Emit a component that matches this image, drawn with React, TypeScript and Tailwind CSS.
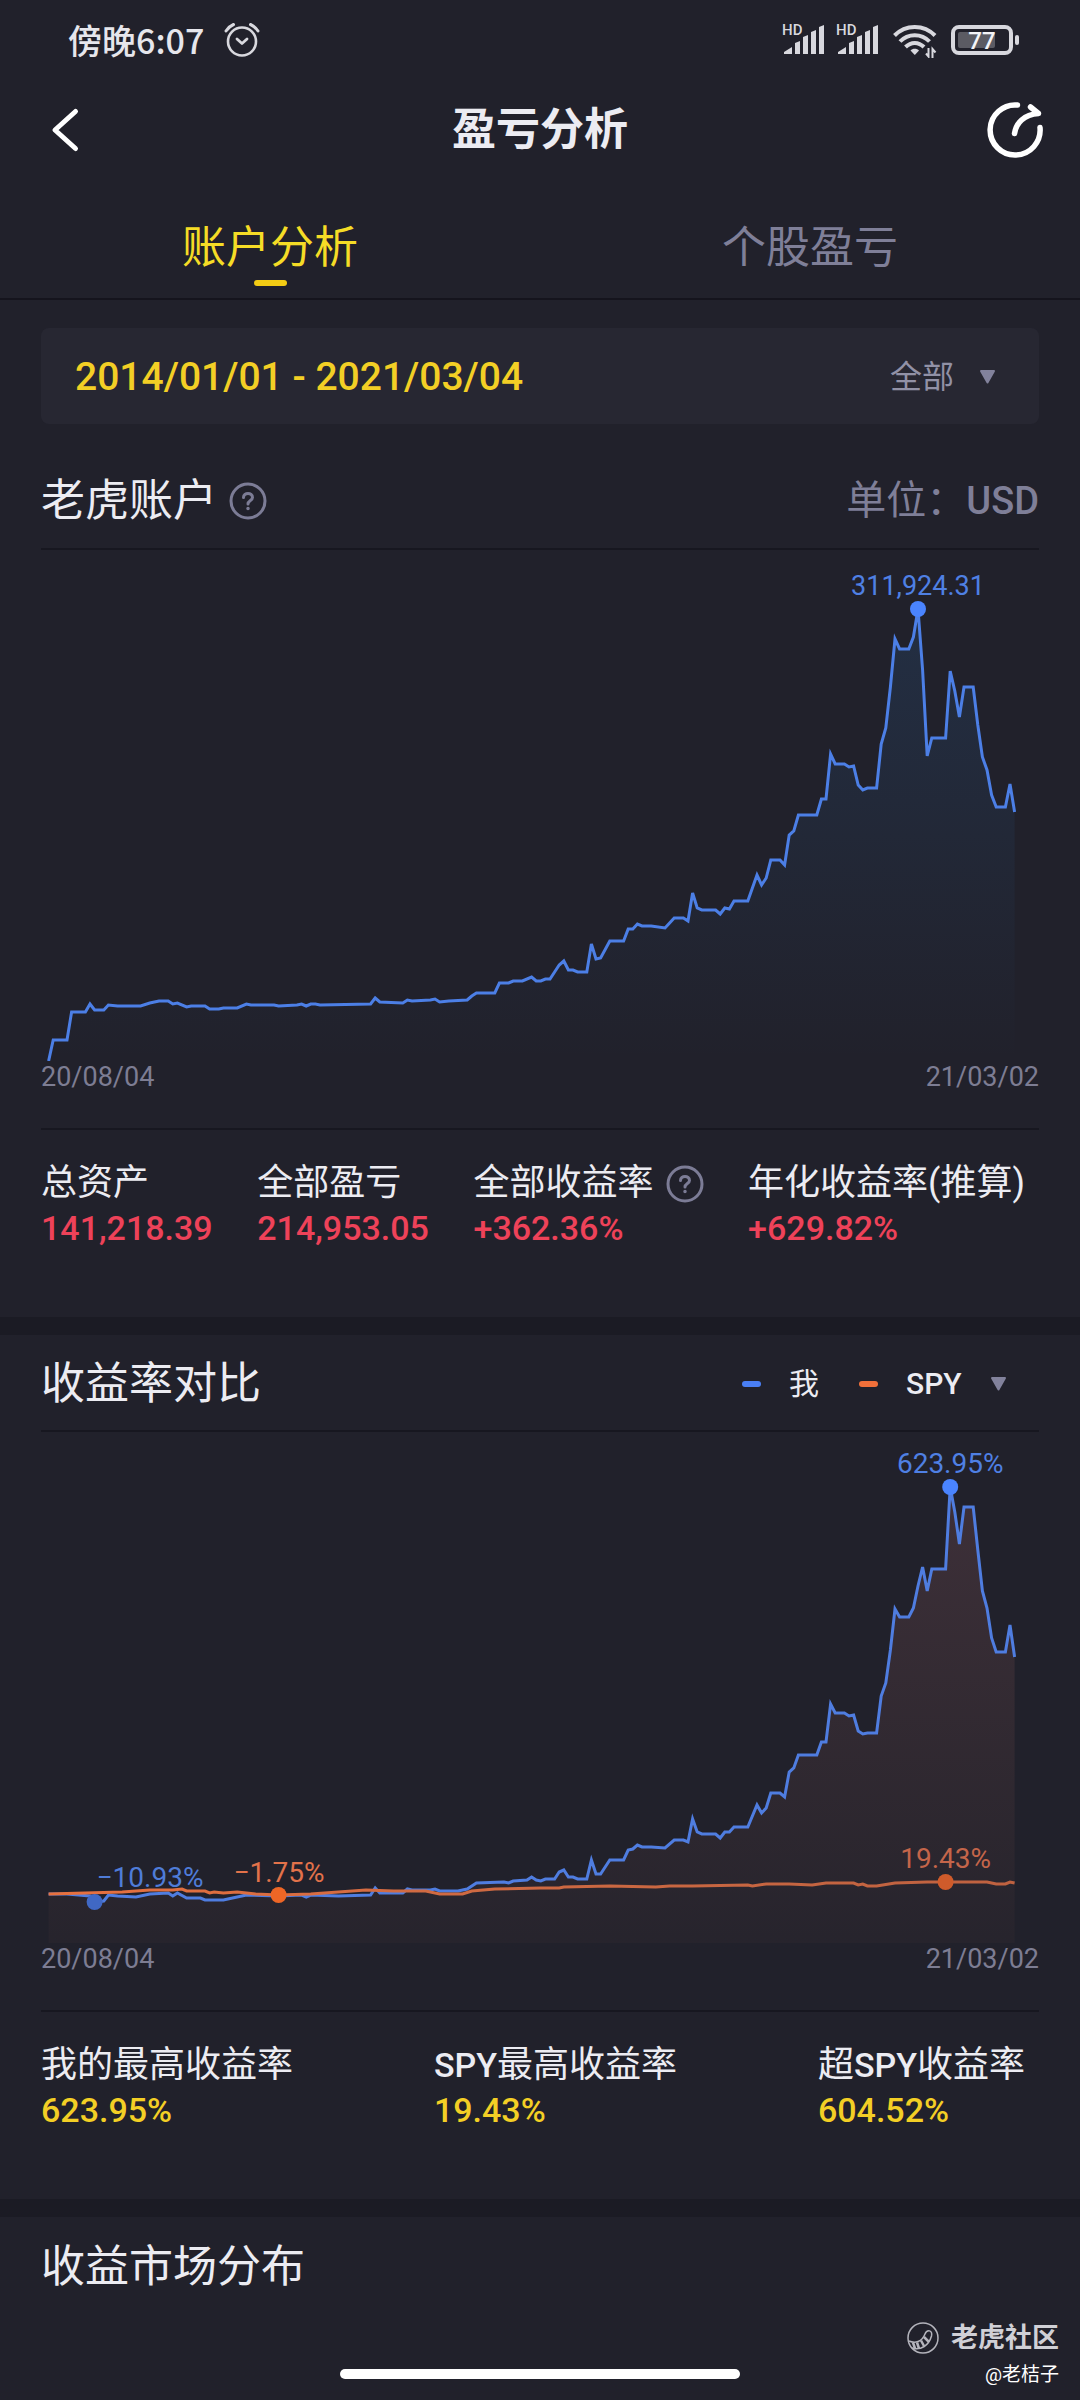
import React, { useState } from 'react';

type Point = [number, number];

// [day, y] pairs, one day is one step on the x axis
const ASSETS: Point[] = [
  [0, 511], [1, 490], [4, 490], [5, 462], [8, 462], [9, 454], [10, 460], [12, 460], [13, 455], [15, 456],
  [20, 456], [22, 453], [24, 451], [26, 451], [27, 454], [28, 453], [30, 457], [31, 456], [34, 456], [35, 459],
  [37, 459], [38, 458], [41, 458], [43, 454], [44, 455], [49, 455], [50, 456], [54, 455], [55, 454], [56, 456],
  [57, 454], [58, 454], [59, 455], [70, 454], [71, 448], [72, 452], [77, 453], [78, 450], [79, 451], [83, 450],
  [84, 449], [85, 452], [87, 451], [91, 450], [92, 446], [93, 443], [97, 443], [98, 433], [100, 433], [101, 431],
  [103, 431], [105, 427], [106, 431], [107, 431], [108, 429], [109, 429], [110, 422], [111, 415], [112, 411],
  [113, 420], [114, 420], [115, 422], [117, 422], [118, 394], [119, 409], [120, 408], [122, 391], [125, 391],
  [126, 379], [127, 379], [128, 374], [129, 376], [131, 376], [134, 378], [135, 373], [136, 368], [138, 368],
  [139, 371], [140, 343], [141, 358], [142, 360], [145, 360], [146, 364], [147, 358], [148, 359], [149, 351],
  [152, 351], [153, 338], [154, 325], [155, 335], [156, 328], [157, 310], [159, 310], [160, 315], [161, 285],
  [162, 281], [163, 265], [167, 265], [168, 249], [169, 249], [170, 204], [171, 214], [173, 214], [174, 217],
  [175, 216], [176, 235], [177, 240], [178, 238], [180, 238], [181, 194], [182, 178], [183, 137], [184, 89],
  [185, 99], [187, 99], [188, 87], [189, 59], [190, 120], [191, 206], [192, 188], [195, 188], [196, 121],
  [197, 141], [198, 167], [199, 137], [201, 137], [202, 175], [203, 207], [204, 220], [205, 245], [206, 257],
  [208, 257], [209, 234], [210, 262],
];

const MY_RETURN: Point[] = [
  [0, 462], [4, 462], [9, 464], [10, 470], [12, 469], [13, 463], [15, 464], [19, 465], [22, 462], [26, 461],
  [27, 464], [28, 461], [30, 466], [33, 466], [34, 468], [38, 468], [42, 464], [43, 463], [50, 464], [55, 463],
  [56, 465], [57, 463], [63, 464], [70, 463], [71, 456], [72, 461], [77, 461], [78, 457], [79, 458], [83, 458],
  [84, 457], [85, 459], [89, 459], [91, 457], [93, 451], [99, 450], [100, 451], [101, 449], [104, 448],
  [105, 445], [106, 448], [107, 449], [108, 447], [110, 447], [111, 440], [112, 438], [113, 445], [114, 445],
  [115, 447], [117, 447], [118, 428], [119, 442], [120, 442], [122, 428], [125, 428], [126, 418], [127, 417],
  [128, 413], [129, 415], [131, 415], [134, 416], [136, 408], [138, 408], [139, 410], [140, 387], [141, 400],
  [142, 402], [145, 402], [146, 406], [147, 400], [148, 400], [149, 395], [152, 395], [154, 373], [155, 381],
  [156, 376], [157, 361], [159, 361], [160, 365], [161, 340], [162, 336], [163, 323], [167, 323], [168, 310],
  [169, 310], [170, 272], [171, 281], [173, 281], [174, 284], [175, 283], [176, 299], [177, 302], [178, 301],
  [180, 301], [181, 264], [182, 251], [183, 218], [184, 177], [185, 185], [187, 185], [188, 176], [189, 154],
  [190, 135], [191, 159], [192, 137], [195, 137], [196, 55], [197, 80], [198, 112], [199, 75], [201, 75],
  [202, 118], [203, 159], [204, 176], [205, 206], [206, 220], [208, 220], [209, 193], [210, 225],
];

const SPY_RETURN: Point[] = [
  [0, 462], [8, 461], [16, 460], [22, 458], [27, 458], [29, 457], [30, 459], [34, 459], [35, 461], [36, 460],
  [38, 461], [41, 460], [45, 462], [50, 463], [57, 462], [63, 460], [69, 458], [75, 459], [82, 459], [85, 462],
  [90, 462], [92, 459], [97, 457], [107, 456], [111, 456], [112, 455], [122, 454], [132, 455], [135, 454],
  [140, 454], [152, 453], [153, 454], [156, 452], [161, 452], [166, 453], [169, 451], [175, 451], [176, 453],
  [177, 452], [178, 454], [180, 454], [184, 451], [191, 450], [195, 450], [202, 450], [204, 450], [206, 452],
  [208, 452], [209, 450], [210, 451],
];

const CHART_BOTTOM = 511;

const dayX = (day: number) => 7.6 + day * 4.6;
const toPoints = (series: Point[]) => series.map(([day, y]) => `${dayX(day)},${y}`).join(' ');
const toArea = (series: Point[]) =>
  `${dayX(0)},${CHART_BOTTOM} ${toPoints(series)} ${dayX(210)},${CHART_BOTTOM}`;

const Signal = () => (
  <svg className="h-[40px] w-[44px]" viewBox="0 0 44 40" fill="#d8d8de">
    <text x="1" y="15" fontSize="15" fontWeight="500">HD</text>
    <path d="M3 34V32L11 27V34ZM14 34V23L19 21V34ZM22 34V17L27 15V34ZM30 34V12L35 10V34ZM38 34V7L43 5V34Z" />
  </svg>
);

const StatusBar = () => (
  <div className="flex h-20 items-center justify-between pl-[68px] pr-[60px] text-[#e6e6ec]">
    <div className="flex items-center gap-5">
      <span className="font-['Noto_Sans_CJK_SC',sans-serif] text-[34px] font-medium leading-[48px]">傍晚6:07</span>
      <svg className="size-9" viewBox="0 0 36 36" fill="none" stroke="#d8d8de" strokeLinecap="round" strokeLinejoin="round">
        <circle cx="18" cy="19.5" r="14" strokeWidth="2.6" />
        <path d="M2 9C4 6 6 4 9.500 2.500M34 9C32 6 30 4 26.500 2.500" strokeWidth="3" />
        <path d="M13 17L18 21.500L23 17" strokeWidth="2.800" />
      </svg>
    </div>
    <div className="flex items-center">
      <Signal />
      <div className="w-[10px]" />
      <Signal />
      <svg className="ml-[14px] h-[36px] w-[44px]" viewBox="0 0 44 36" fill="none" stroke="#d8d8de" strokeWidth="4">
        <path d="M1.500 13.500C12.500 2 31 2 42 13.500" />
        <path d="M7 19.500C15 11 28.500 11 36.500 19.500" />
        <path d="M12.500 25C18 19.500 25.500 19.500 31 25" />
        <path d="M17.500 28.500L21.800 33L26 28.500C24 26 19.500 26 17.500 28.500Z" fill="#d8d8de" stroke="none" />
        <path d="M35.500 26V34.500L33 31.500M39.500 36V27L42.500 30.500" strokeWidth="2" />
      </svg>
      <svg className="ml-[14px] h-[30px] w-[69px]" viewBox="0 0 69 30">
        <rect x="2" y="2" width="58" height="26" rx="6" fill="none" stroke="#d8d8de" strokeWidth="4" />
        <rect x="7" y="7" width="37" height="16" rx="2" fill="#5b5b63" />
        <rect x="64" y="10" width="4" height="10" rx="2" fill="#d8d8de" />
        <text x="31" y="24" fontSize="24" fontWeight="500" fill="#f4f4f8" textAnchor="middle">77</text>
      </svg>
    </div>
  </div>
);

const HelpButton = ({ label }: { label: string }) => (
  <button type="button" aria-label={label}>
    <svg className="size-[38px]" viewBox="0 0 38 38" fill="none" stroke="#7c7c96" strokeLinecap="round">
      <circle cx="19" cy="19" r="17" strokeWidth="3" />
      <path d="M14.500 15.500C14.500 10 23.500 10 23.500 15.500C23.500 18.500 19 18.500 19 22" strokeWidth="3" />
      <circle cx="19" cy="26.500" r="1" fill="#7c7c96" strokeWidth="1.500" />
    </svg>
  </button>
);

const Caret = () => (
  <svg className="pointer-events-none h-[14px] w-[17px]" viewBox="0 0 17 14">
    <path d="M2 1H15L8.500 12.500Z" fill="#82829c" stroke="#82829c" strokeWidth="2" strokeLinejoin="round" />
  </svg>
);

const ChartDates = () => (
  <div className="flex justify-between text-[27px] leading-[32px] text-[#7d7d93]">
    <span>20/08/04</span>
    <span>21/03/02</span>
  </div>
);

interface Stat {
  label: React.ReactNode;
  value: string;
  help?: string;
}

const Stats = ({ items, color }: { items: Stat[]; color: string }) => (
  <dl className="mt-[35px] flex justify-between border-t-2 border-[#171720] pb-[66px] pr-[14px] pt-[31px]">
    {items.map((item) => (
      <div key={item.value}>
        <dt className="flex h-[45px] items-center gap-3 whitespace-nowrap text-[36px] leading-[45px] text-[#ececf2]">
          <span>{item.label}</span>
          {item.help && <HelpButton label={item.help} />}
        </dt>
        <dd className={`text-[34px] font-medium leading-[45px] ${color}`}>{item.value}</dd>
      </div>
    ))}
  </dl>
);

const App = () => {
  const [tab, setTab] = useState('account');
  const [range, setRange] = useState('all');
  const [benchmark, setBenchmark] = useState('SPY');

  const tabs = [
    { id: 'account', name: '账户分析' },
    { id: 'stock', name: '个股盈亏' },
  ];

  return (
    <div className="flex min-h-screen flex-col bg-[#21212b] font-['Roboto','Noto_Sans_CJK_SC',sans-serif] text-[#ececf2]">
      <StatusBar />

      <header className="grid h-[100px] grid-cols-[1fr_auto_1fr] items-center px-[37px]">
        <button type="button" aria-label="返回" className="justify-self-start pl-3">
          <svg className="h-[48px] w-[32px]" viewBox="0 0 32 48" fill="none" stroke="#fff" strokeWidth="5" strokeLinecap="round" strokeLinejoin="round">
            <path d="M26.500 5.500L6 24L26.500 42.500" />
          </svg>
        </button>
        <h1 className="text-[44px] font-bold leading-[60px]">盈亏分析</h1>
        <button type="button" aria-label="分享" className="justify-self-end">
          <svg className="size-14" viewBox="0 0 56 56" fill="none" stroke="#fff" strokeWidth="5.500" strokeLinecap="round" strokeLinejoin="round">
            <path d="M30.500 3.100A25 25 0 1 0 53 25.500" />
            <path d="M27.500 31.500C29 21 37 12.500 51.500 11.500L43.500 5" />
          </svg>
        </button>
      </header>

      <nav className="grid grid-cols-2 border-b-2 border-[#15141d]">
        {tabs.map((t) => (
          <button
            key={t.id}
            type="button"
            onClick={() => setTab(t.id)}
            className={`flex flex-col items-center pb-3 pt-[38px] text-[44px] leading-[60px] ${tab === t.id ? 'text-[#f5dc26]' : 'text-[#7f7f98]'}`}
          >
            {t.name}
            <span className={`mt-[2px] h-[6px] w-[33px] rounded-full ${tab === t.id ? 'bg-[#f3cc14]' : ''}`} />
          </button>
        ))}
      </nav>

      <main>
        <section className="px-[41px] pt-7">
          <div className="flex h-24 items-center justify-between rounded-lg bg-[#272732] pl-[34px] pr-[43px] pt-[2px]">
            <button type="button" className="text-[39px] font-medium leading-[48px] text-[#f3cf25]">
              2014/01/01 - 2021/03/04
            </button>
            <div className="flex items-center gap-6">
              <select
                aria-label="时间范围"
                value={range}
                onChange={(e) => setRange(e.target.value)}
                className="appearance-none bg-transparent text-[32px] leading-[48px] text-[#9191a6]"
              >
                <option value="all">全部</option>
                <option value="year">今年</option>
              </select>
              <Caret />
            </div>
          </div>

          <div className="mt-7 flex h-[98px] items-center justify-between border-b-2 border-[#171720] pt-[2px]">
            <div className="flex items-center gap-3">
              <h2 className="text-[44px] leading-[60px]">老虎账户</h2>
              <HelpButton label="账户说明" />
            </div>
            <p className="text-[40px] leading-[60px] text-[#7f7f98]">
              单位：<span className="text-[38px] font-medium">USD</span>
            </p>
          </div>

          <svg className="w-full" viewBox="0 0 998 511">
            <defs>
              <linearGradient id="assetFill" x1="0" y1="59" x2="0" y2="511" gradientUnits="userSpaceOnUse">
                <stop offset="0" stopColor="#2f84d8" stopOpacity="0.14" />
                <stop offset="1" stopColor="#2f84d8" stopOpacity="0" />
              </linearGradient>
            </defs>
            <polygon points={toArea(ASSETS)} fill="url(#assetFill)" />
            <polyline points={toPoints(ASSETS)} fill="none" stroke="#4c7fe6" strokeWidth="3" />
            <circle cx={dayX(189)} cy="59" r="8" fill="#4a84ff" />
            <text x={dayX(189)} y="45" fontSize="27" fill="#4f80e4" textAnchor="middle">311,924.31</text>
          </svg>
          <ChartDates />

          <Stats
            color="text-[#ee4259]"
            items={[
              { label: '总资产', value: '141,218.39' },
              { label: '全部盈亏', value: '214,953.05' },
              { label: '全部收益率', value: '+362.36%', help: '收益率说明' },
              { label: '年化收益率(推算)', value: '+629.82%' },
            ]}
          />
        </section>

        <div className="h-[18px] bg-[#1b1b24]" />

        <section className="px-[41px]">
          <div className="flex h-[97px] items-center justify-between border-b-2 border-[#171720] pt-[2px]">
            <h2 className="text-[44px] leading-[60px]">收益率对比</h2>
            <div className="flex items-center pr-8 text-[30px] leading-[48px]">
              <span className="mr-7 h-[6px] w-[19px] rounded-full bg-[#4a7ff5]" />
              <span className="mr-10">我</span>
              <span className="mr-7 h-[6px] w-[19px] rounded-full bg-[#f1703a]" />
              <select
                aria-label="对比指数"
                value={benchmark}
                onChange={(e) => setBenchmark(e.target.value)}
                className="mr-7 appearance-none bg-transparent font-medium leading-[48px]"
              >
                <option value="SPY">SPY</option>
                <option value="DIA">DIA</option>
              </select>
              <Caret />
            </div>
          </div>

          <svg className="w-full" viewBox="0 0 998 511">
            <defs>
              <linearGradient id="returnFill" x1="0" y1="55" x2="0" y2="511" gradientUnits="userSpaceOnUse">
                <stop offset="0" stopColor="#e08488" stopOpacity="0.15" />
                <stop offset="1" stopColor="#e08468" stopOpacity="0.03" />
              </linearGradient>
              <linearGradient id="spyLine" x1="0" y1="0" x2="998" y2="0" gradientUnits="userSpaceOnUse">
                <stop offset="0" stopColor="#e8713f" />
                <stop offset="0.4" stopColor="#d06a42" />
                <stop offset="1" stopColor="#be6140" />
              </linearGradient>
            </defs>
            <polygon points={toArea(MY_RETURN)} fill="url(#returnFill)" />
            <polyline points={toPoints(MY_RETURN)} fill="none" stroke="#4f7de0" strokeWidth="3" />
            <polyline points={toPoints(SPY_RETURN)} fill="none" stroke="url(#spyLine)" strokeWidth="3" />
            <circle cx={dayX(196)} cy="55" r="8" fill="#4a84ff" />
            <circle cx={dayX(10)} cy="470" r="8" fill="#4068c4" />
            <circle cx={dayX(50)} cy="463" r="8" fill="#ee6626" />
            <circle cx={dayX(195)} cy="450" r="8" fill="#cf5b2b" />
            <g fontSize="28" textAnchor="middle">
              <text x={dayX(196)} y="41" fill="#4f80e4">623.95%</text>
              <text x="109" y="455" fill="#4f7cd8">−10.93%</text>
              <text x="238" y="450" fill="#e2724a">−1.75%</text>
              <text x={dayX(195)} y="436" fill="#c4654a">19.43%</text>
            </g>
          </svg>
          <ChartDates />

          <Stats
            color="text-[#f3cf25]"
            items={[
              { label: '我的最高收益率', value: '623.95%' },
              { label: <><span className="text-[34px] font-medium">SPY</span>最高收益率</>, value: '19.43%' },
              { label: <>超<span className="text-[34px] font-medium">SPY</span>收益率</>, value: '604.52%' },
            ]}
          />
        </section>

        <div className="h-[18px] bg-[#1b1b24]" />

        <section className="flex h-[98px] items-center px-[41px] pt-[2px]">
          <h2 className="text-[44px] leading-[60px]">收益市场分布</h2>
        </section>
      </main>

      <footer className="mt-auto grid grid-cols-[1fr_400px_1fr] items-end pb-[8px]">
        <div />
        <div className="mb-[13px] h-[10px] rounded-full bg-white" />
        <div className="flex flex-col items-end pr-[21px]">
          <div className="flex items-center gap-3">
            <svg className="size-8" viewBox="0 0 32 32" fill="none" stroke="#b4b4bc" strokeWidth="1.500">
              <circle cx="16" cy="16" r="15" />
              <path d="M2 19C8 21.500 15 20 18 12C20 7 26 8 24.500 14C22 23 14 29 5 26" />
              <path d="M6 20.500L8 26.500M10 20.500L12 26.500M14 18.500L17 24M17 15L22 20" strokeWidth="2.500" />
            </svg>
            <span className="text-[27px] font-bold leading-[40px] text-[#d0d0d6]">老虎社区</span>
          </div>
          <span className="text-[19px] leading-[34px] text-white">@老桔子</span>
        </div>
      </footer>
    </div>
  );
};

export default App;
